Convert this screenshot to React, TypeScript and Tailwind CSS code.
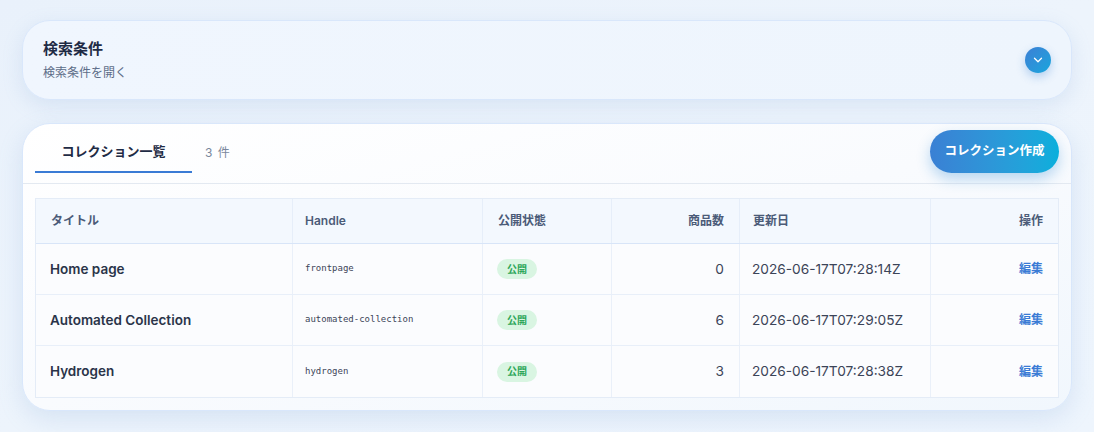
import { ChevronDown } from 'lucide-react';

const rows = [
  { title: 'Home page', handle: 'frontpage', count: 0, updated: '2026-06-17T07:28:14Z' },
  { title: 'Automated Collection', handle: 'automated-collection', count: 6, updated: '2026-06-17T07:29:05Z' },
  { title: 'Hydrogen', handle: 'hydrogen', count: 3, updated: '2026-06-17T07:28:38Z' },
];

const font = { fontFamily: 'Inter, "Noto Sans CJK JP", sans-serif' };

export default function App() {
  return (
    <div
      className="w-[1094px] h-[432px] bg-gradient-to-br from-[#e9f1fb] via-[#edf4fc] to-[#eef5fd] px-[22px] pt-[20px]"
      style={font}
    >
      <div className="h-[80px] rounded-[28px] border border-[#d9e7fb] bg-gradient-to-r from-[#f0f6fe] to-[#eef5fd] shadow-[0_6px_20px_rgba(120,160,210,0.18)] flex items-center justify-between pl-[20px] pr-[20px]">
        <div className="flex flex-col">
          <span className="text-[15px] font-semibold text-[#1f2b45] leading-[20px]">検索条件</span>
          <span className="text-[12px] text-[#5d6d88] mt-[6px] leading-[16px]">検索条件を開く</span>
        </div>
        <div className="w-[26px] h-[26px] rounded-full bg-gradient-to-br from-[#3a7fd5] to-[#10a6dd] flex items-center justify-center shadow-[0_4px_10px_rgba(40,120,210,0.3)]">
          <ChevronDown size={14} strokeWidth={2.2} className="text-white" />
        </div>
      </div>

      <div className="mt-[23px] h-[288px] rounded-[28px] border border-[#d9e7fb] bg-gradient-to-br from-[#ffffff] via-[#f9fbfe] to-[#f1f7fd] shadow-[0_8px_24px_rgba(120,160,210,0.2)] flex flex-col">
        <div className="flex items-start justify-between h-[60px] pl-[12px] pr-[12px] border-b border-[#e3e9f1]">
          <div className="flex items-start">
            <div className="w-[157px] h-[49px] flex items-center justify-center border-b-2 border-[#3a7bd5] pt-[8px]">
              <span className="text-[13px] font-bold text-[#1f2b45]">コレクション一覧</span>
            </div>
            <div className="h-[49px] flex items-center pl-[13px] pt-[8px]">
              <span className="text-[12px] text-[#7a879c] tracking-[1px]">3 件</span>
            </div>
          </div>
          <button className="w-[129px] h-[43px] mt-[6px] rounded-full bg-gradient-to-r from-[#3a80d4] to-[#08afdc] text-white text-[12.5px] font-semibold shadow-[0_6px_14px_rgba(30,130,210,0.3)]">
            コレクション作成
          </button>
        </div>

        <div className="px-[12px] pt-[14px]">
          <div className="border border-[#e4ecf7] bg-white/60">
            <div className="flex h-[45px] bg-[#f3f8fe] border-b border-[#d8e5f8] text-[12px] font-semibold text-[#4b5b78]">
              <div className="w-[257px] px-[15px] flex items-center border-r border-[#e6eef9]">タイトル</div>
              <div className="w-[190px] px-[12px] flex items-center border-r border-[#e6eef9]">Handle</div>
              <div className="w-[129px] px-[15px] flex items-center border-r border-[#e6eef9]">公開状態</div>
              <div className="w-[128px] px-[15px] flex items-center justify-end border-r border-[#e6eef9]">商品数</div>
              <div className="w-[191px] px-[13px] flex items-center border-r border-[#e6eef9]">更新日</div>
              <div className="flex-1 px-[15px] flex items-center justify-end">操作</div>
            </div>
            {rows.map((row, i) => (
              <div
                key={row.handle}
                className={`flex h-[51px] bg-[#fbfcfe] ${i < rows.length - 1 ? 'border-b border-[#e8eff9]' : ''}`}
              >
                <div className="w-[257px] px-[14px] flex items-center border-r border-[#eaf0f9] text-[13.5px] font-semibold text-[#2a3449]">
                  {row.title}
                </div>
                <div
                  className="w-[190px] px-[12px] flex items-center border-r border-[#eaf0f9] text-[9px] text-[#3b4458]"
                  style={{ fontFamily: '"DejaVu Sans Mono", monospace' }}
                >
                  {row.handle}
                </div>
                <div className="w-[129px] px-[14px] flex items-center border-r border-[#eaf0f9]">
                  <span className="h-[20px] px-[10px] rounded-full bg-[#d9f5e2] text-[#2ea75a] text-[10px] font-bold flex items-center">
                    公開
                  </span>
                </div>
                <div className="w-[128px] px-[15px] flex items-center justify-end border-r border-[#eaf0f9] text-[13.7px] text-[#3b4458]">
                  {row.count}
                </div>
                <div className="w-[191px] px-[12px] flex items-center border-r border-[#eaf0f9] text-[13.7px] text-[#3b4458]">
                  {row.updated}
                </div>
                <div className="flex-1 px-[15px] flex items-center justify-end text-[12px] font-bold text-[#3a7bd5]">
                  編集
                </div>
              </div>
            ))}
          </div>
        </div>
      </div>
    </div>
  );
}
